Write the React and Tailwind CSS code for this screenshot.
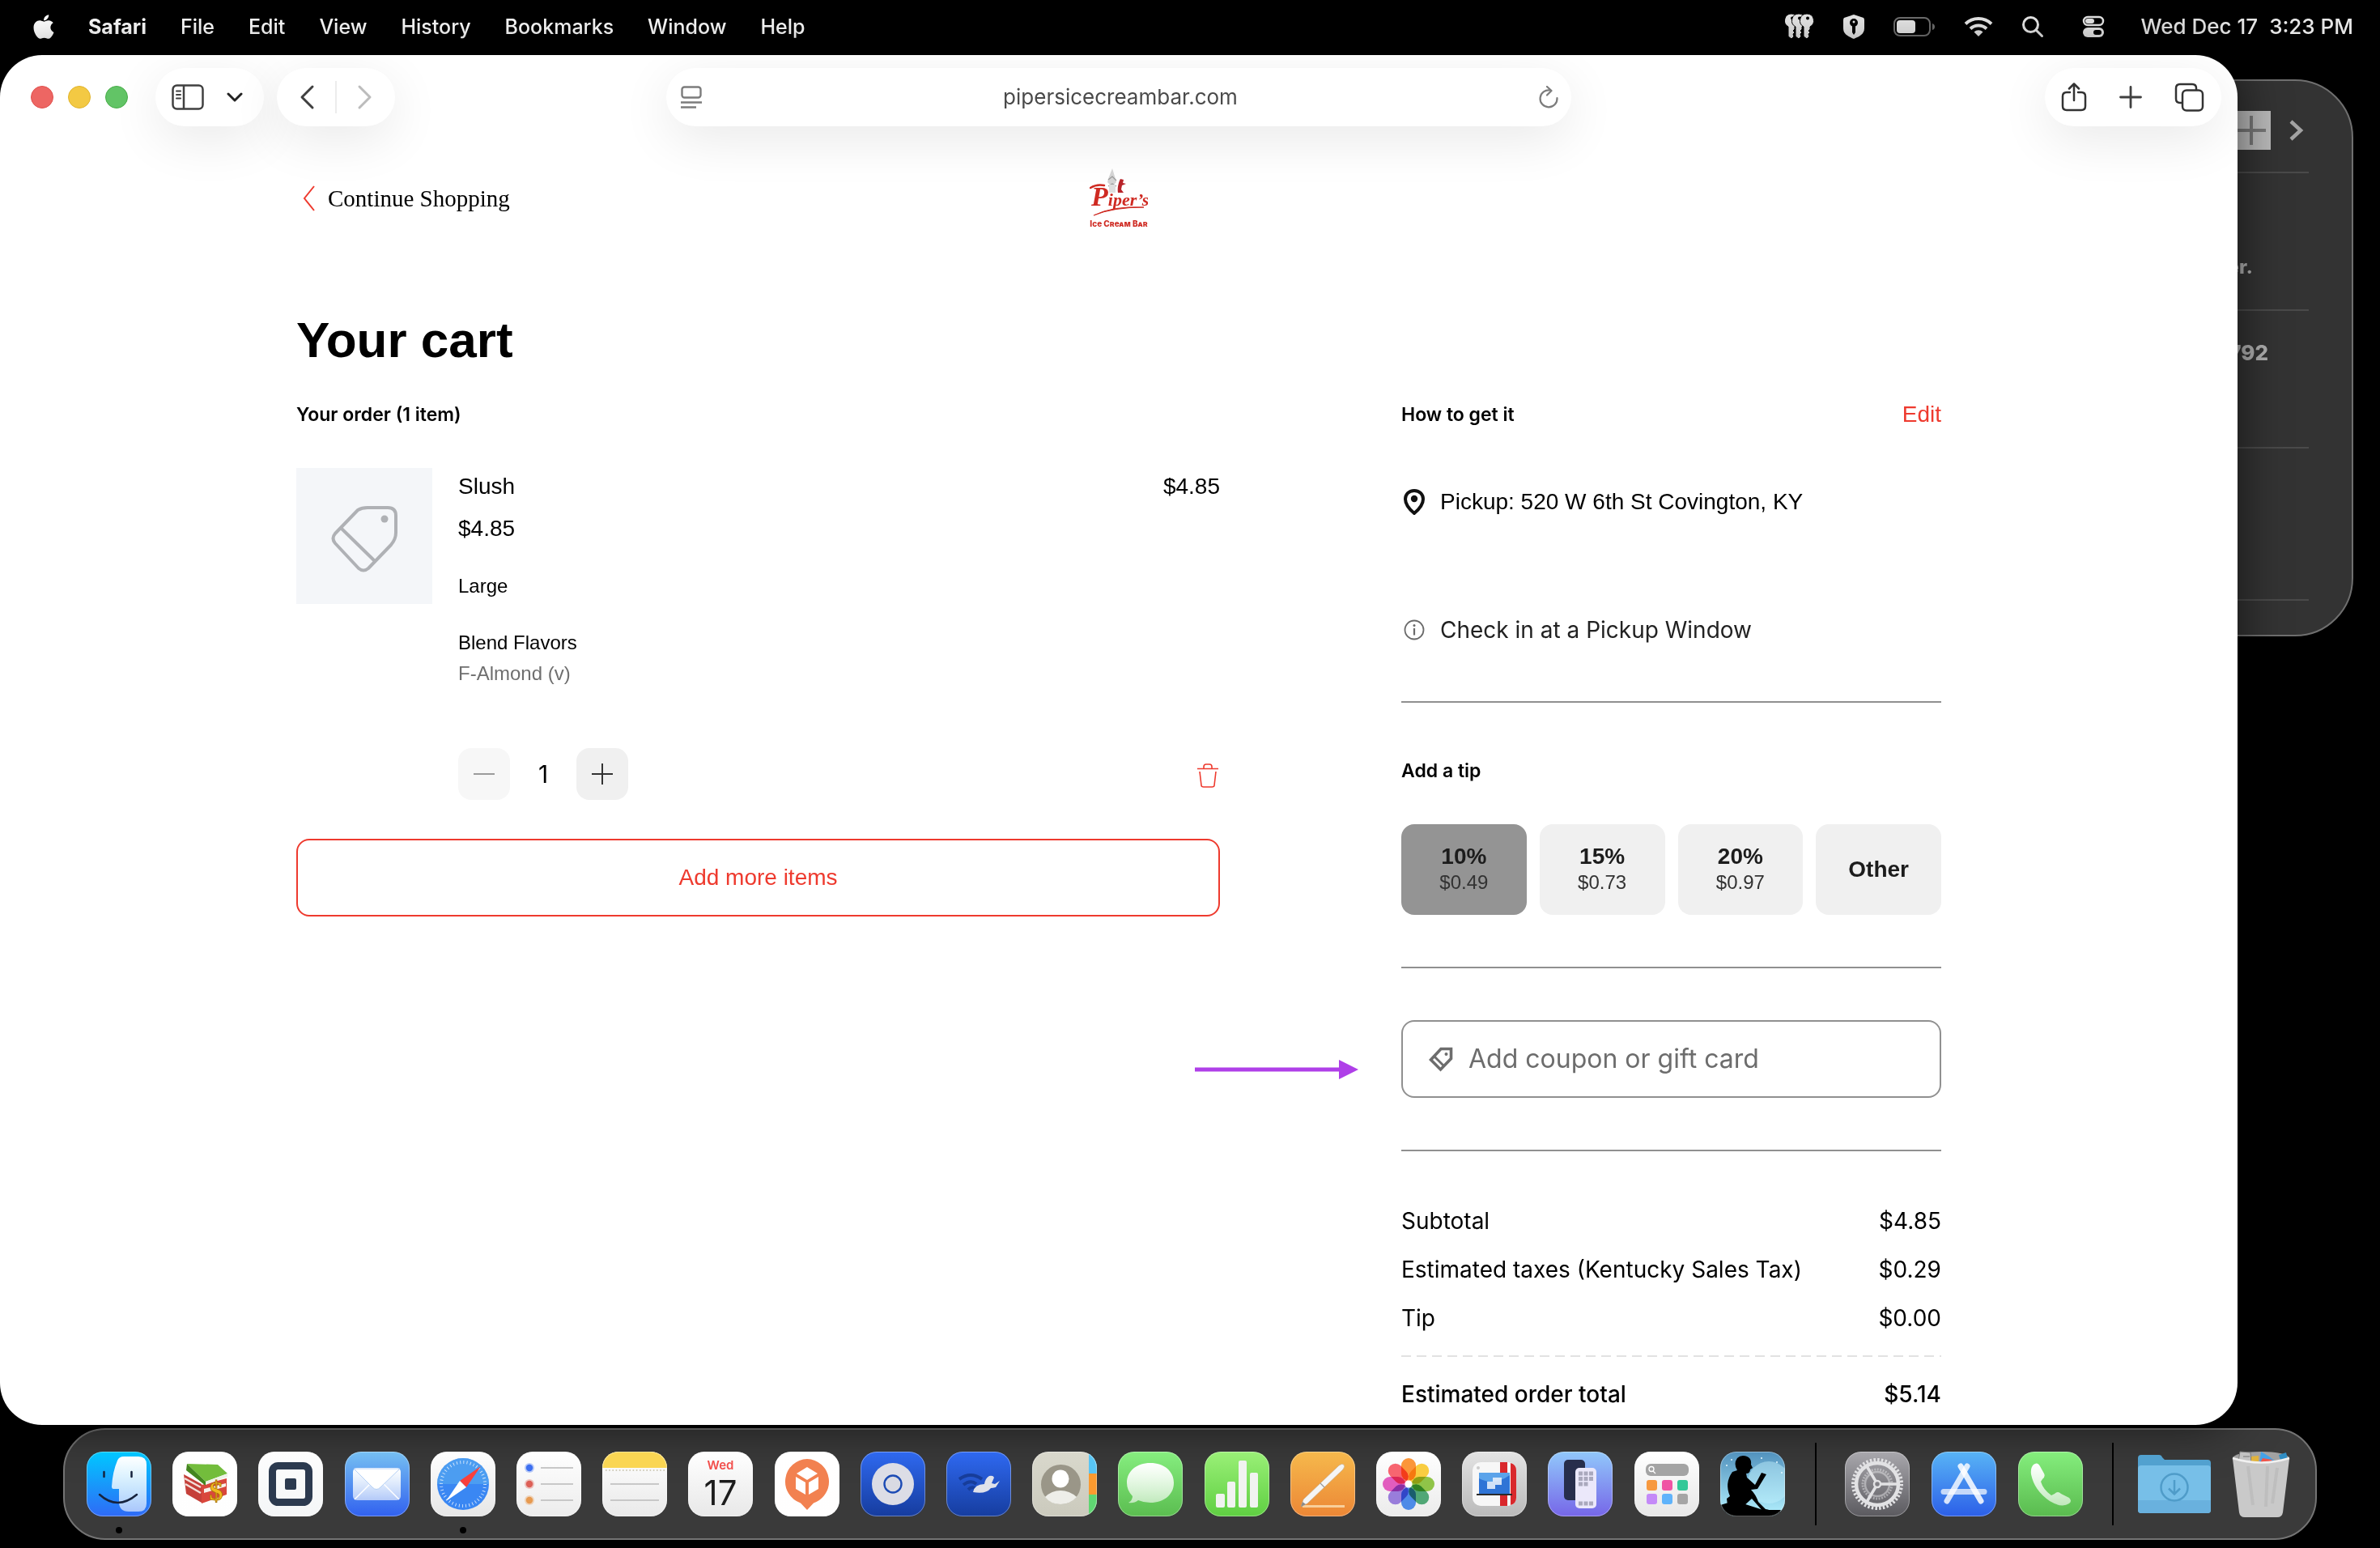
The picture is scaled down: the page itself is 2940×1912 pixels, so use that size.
import { useState } from "react";
import { FaApple } from "react-icons/fa";

const menus = ["File", "Edit", "View", "History", "Bookmarks", "Window", "Help"];

const tips = [
  { id: "10", label: "10%", amount: "$0.49" },
  { id: "15", label: "15%", amount: "$0.73" },
  { id: "20", label: "20%", amount: "$0.97" },
  { id: "other", label: "Other" },
];

const totals = [
  { label: "Subtotal", value: "$4.85" },
  { label: "Estimated taxes (Kentucky Sales Tax)", value: "$0.29" },
  { label: "Tip", value: "$0.00" },
];

/* Menu bar */
const KeysIcon = () => (
  <svg className="w-9 h-8" viewBox="0 0 36 32" fill="#e6e6e6">
    {[8, 17, 27].map((x) => (
      <g key={x} stroke="#000" strokeWidth="1">
        <path d={`M${x} 0a8.500 8.500 0 0 1 4 16v3l-2 2 2 2-2 2 1 3-3 3-4-3V16a8.500 8.500 0 0 1 4-16z`} />
        <circle cx={x + 1} cy="5.500" r="2" fill="#000" stroke="none" />
      </g>
    ))}
  </svg>
);

const ShieldIcon = () => (
  <svg className="w-7 h-8" viewBox="0 0 28 32">
    <path d="M14 1 26 5q1 1 1 3v10c0 7-6 10-13 13C7 28 1 25 1 18V8q0-2 1-3z" fill="#e6e6e6" />
    <circle cx="14" cy="11" r="5" />
    <path d="M12 14h4v9l-2 3-2-3z" />
    <circle cx="14" cy="10" r="1.500" fill="#e6e6e6" />
  </svg>
);

const BatteryIcon = () => (
  <svg className="w-[52px] h-6" viewBox="0 0 52 24">
    <rect x="1" y="1" width="44" height="22" rx="7" fill="none" stroke="#6e6e6e" strokeWidth="2" />
    <rect x="4" y="4" width="23" height="16" rx="4" fill="#e6e6e6" />
    <path d="M48 8q3 1 3 4t-3 4z" fill="#6e6e6e" />
  </svg>
);

const WifiIcon = () => (
  <svg className="w-9 h-[26px]" viewBox="0 0 36 26" fill="none" stroke="#e6e6e6" strokeWidth="4">
    <path d="M2 9.500a23 23 0 0 1 32 0" />
    <path d="M8 15.500a14.500 14.500 0 0 1 20 0" />
    <path d="M18 25l-5.500-5.500a8 8 0 0 1 11 0z" fill="#e6e6e6" stroke="none" />
  </svg>
);

const SearchIcon = () => (
  <svg className="w-7 h-7" viewBox="0 0 28 28" fill="none" stroke="#e6e6e6" strokeWidth="3" strokeLinecap="round">
    <circle cx="11.500" cy="11.500" r="9" />
    <path d="M18.500 18.500 25.500 25.500" />
  </svg>
);

const ControlIcon = () => (
  <svg className="w-7 h-7" viewBox="0 0 28 28">
    <rect x="2" y="2" width="24" height="10" rx="5" fill="none" stroke="#e6e6e6" strokeWidth="2.500" />
    <rect x="4" y="4" width="11" height="6" rx="3" fill="#e6e6e6" />
    <rect x="1" y="15" width="26" height="12" rx="6" fill="#e6e6e6" />
    <rect x="14" y="18" width="10" height="6" rx="3" />
  </svg>
);

const MenuBar = () => (
  <header className="flex h-[68px] shrink-0 items-center justify-between pb-0.5 pl-[41px] pr-[33px] text-[25px] leading-8 text-white font-medium">
    <nav className="flex items-center gap-[42px]">
      <FaApple className="h-[34px] w-[26px]" />
      <span className="font-bold">Safari</span>
      {menus.map((item) => (
        <button key={item}>{item}</button>
      ))}
    </nav>
    <div className="flex items-center">
      <div className="mr-11 flex items-center gap-[35px]">
        <KeysIcon />
        <ShieldIcon />
        <BatteryIcon />
        <WifiIcon />
        <SearchIcon />
        <span className="ml-3">
          <ControlIcon />
        </span>
      </div>
      <time className="flex gap-3.5 text-[26px] text-[#e6e6e6]">
        <span>Wed Dec 17</span>
        <span>3:23 PM</span>
      </time>
    </div>
  </header>
);

/* Browser toolbar */
const pill = "flex h-[72px] items-center rounded-full bg-white shadow-[0_16px_64px_rgba(0,0,0,0.09)]";

const Toolbar = () => (
  <div className="grid grid-cols-[1fr_1118px_1fr] items-center px-5 pt-4">
    <div className="flex items-center pl-[18px]">
      <div className="flex gap-[18px]">
        <span className="size-7 rounded-full border border-[#e0504d] bg-[#ed6663]" />
        <span className="size-7 rounded-full border border-[#e0b32c] bg-[#f3c943]" />
        <span className="size-7 rounded-full border border-[#48ad49] bg-[#62c466]" />
      </div>
      <div className={`${pill} ml-[34px] gap-7 pl-5 pr-[26px]`}>
        <button aria-label="Sidebar">
          <svg className="h-8 w-10" viewBox="0 0 40 32" fill="none" stroke="#404040" strokeWidth="2.500">
            <rect x="1.500" y="1.500" width="37" height="29" rx="5" />
            <path d="M15 2v28" />
            <path d="M6 8.500h5M6 13h5M6 17.500h5" strokeWidth="2" strokeLinecap="round" />
          </svg>
        </button>
        <button aria-label="Tab groups">
          <svg className="h-4 w-5" viewBox="0 0 20 16" fill="none" stroke="#222" strokeWidth="3" strokeLinecap="round" strokeLinejoin="round">
            <path d="M2 4l8 8 8-8" />
          </svg>
        </button>
      </div>
      <div className={`${pill} ml-4 gap-6 px-7`}>
        <button aria-label="Back">
          <svg className="h-8 w-5" viewBox="0 0 20 32" fill="none" stroke="#404040" strokeWidth="3" strokeLinecap="round" strokeLinejoin="round">
            <path d="M16 3 3 16l13 13" />
          </svg>
        </button>
        <span className="h-10 w-0.5 bg-[#ececec]" />
        <button aria-label="Forward">
          <svg className="h-8 w-5" viewBox="0 0 20 32" fill="none" stroke="#bcbcbc" strokeWidth="3" strokeLinecap="round" strokeLinejoin="round">
            <path d="M4 3l13 13L4 29" />
          </svg>
        </button>
      </div>
    </div>
    <div className={`${pill} justify-between pl-[18px] pr-3.5 text-[26px] leading-8 text-[#4a4a4a]`}>
      <svg className="h-7 w-7" viewBox="0 0 28 28" fill="none" stroke="#7c7c7c" strokeWidth="2.400">
        <rect x="1.500" y="1.500" width="23" height="13" rx="3" />
        <path d="M0 20.500h26M0 26.500h19" />
      </svg>
      <span>pipersicecreambar.com</span>
      <button aria-label="Reload">
        <svg className="h-7 w-7" viewBox="0 0 28 28" fill="none" stroke="#7c7c7c" strokeWidth="2.200" strokeLinecap="round" strokeLinejoin="round">
          <path d="M16 5.500A10.500 10.500 0 1 0 24.500 15" />
          <path d="M12 1l5.500 5-5.500 5.500" />
        </svg>
      </button>
    </div>
    <div className="flex justify-end">
      <div className={`${pill} gap-10 px-5`}>
        <button aria-label="Share">
          <svg className="h-9 w-8" viewBox="0 0 32 36" fill="none" stroke="#333" strokeWidth="2.500" strokeLinecap="round" strokeLinejoin="round">
            <path d="M11 12H7q-5 0-5 5v12q0 5 5 5h18q5 0 5-5V17q0-5-5-5h-4" />
            <path d="M16 22V1.500M10 7.500l6-6 6 6" />
          </svg>
        </button>
        <button aria-label="New tab">
          <svg className="h-7 w-7" viewBox="0 0 28 28" stroke="#404040" strokeWidth="2.800" strokeLinecap="round">
            <path d="M14 1.500v25M1.500 14h25" />
          </svg>
        </button>
        <button aria-label="Tabs">
          <svg className="h-9 w-[38px]" viewBox="0 0 38 36" fill="none" stroke="#333" strokeWidth="2.500">
            <path d="M9 25H7q-5 0-5-5V7q0-5 5-5h15q5 0 5 5v2" />
            <rect x="10" y="9.500" width="25" height="25" rx="5" />
          </svg>
        </button>
      </div>
    </div>
  </div>
);

const PipersLogo = () => (
  <svg className="h-[73px] w-[72px]" viewBox="0 0 72 73">
    <path d="M28 0l4 13 1 4-3 3h-5l-3-3 1-4z" fill="#d4d4d4" />
    <path d="M23 14l5-4 5 5M23 22l5-3 5 3" fill="none" stroke="#999" strokeWidth="1.200" />
    <path d="M24 20h8v10h-8z" fill="#dedede" />
    <path d="M35 30c-1-7 1-13 3-17l4 1-1 4 4 1-5 2-1 5 3 4z" fill="#b8242a" />
    <path d="M1 24q8-5 17-3" fill="none" stroke="#cf2a22" strokeWidth="2.500" strokeLinecap="round" />
    <path d="M5 58q24-12 62-10-38 0-62 10z" fill="#cf2a22" stroke="#cf2a22" strokeWidth="1" />
    <text x="2" y="46" fontSize="34" fontWeight="700" fontStyle="italic" fill="#cf2a22" fontFamily="Liberation Serif, serif">
      P<tspan fontSize="22">iper’s</tspan>
    </text>
    <text x="36" y="72" textAnchor="middle" fontSize="10" fontWeight="800" fill="#cf2a22" fontFamily="Inter, sans-serif" fontVariant="small-caps">
      Ice Cream Bar
    </text>
  </svg>
);

const TagIcon = ({ className, width }) => (
  <svg className={className} viewBox="0 0 84 84" fill="none" stroke="currentColor" strokeWidth={width} strokeLinejoin="round">
    <path d="M34 6 6 35q-5 6 0 12l29 31q6 5 12 0l28-29q6-7 6-15V13Q81 3 71 3H46q-7 0-12 3z" />
    <path d="M13 28 56 70" />
    <circle cx="67" cy="17" r="4.500" fill="currentColor" stroke="none" />
  </svg>
);

const CouponIcon = () => (
  <svg className="size-8" viewBox="0 0 32 32" fill="none" stroke="currentColor" strokeWidth="3.600">
    <path d="M16 3.500h12.500v12L15.500 29 3.500 17z" />
    <path d="M7.500 12.500 19.500 24.500" strokeWidth="3" />
    <circle cx="22.500" cy="10" r="2" fill="currentColor" stroke="none" />
  </svg>
);

const CartItem = () => {
  const [qty, setQty] = useState(1);

  return (
    <article className="mt-[50px] flex gap-8">
      <div className="flex size-[168px] shrink-0 items-center justify-center bg-[#f4f6f9] pt-2 text-[#afb1b5]">
        <TagIcon className="size-[84px]" width={4} />
      </div>
      <div className="flex flex-1 flex-col pt-[3px] text-2xl leading-8">
        <div className="flex justify-between text-[28px] leading-10">
          <h3>Slush</h3>
          <span>$4.85</span>
        </div>
        <p className="mt-3 text-[28px] leading-10">$4.85</p>
        <p className="mt-[35px]">Large</p>
        <p className="mt-[38px]">Blend Flavors</p>
        <p className="mt-1.5 text-[#6f6f6f]">F-Almond (v)</p>
        <div className="mt-[76px] flex items-center justify-between">
          <div className="flex items-center">
            <button
              aria-label="Remove one"
              disabled={qty === 1}
              onClick={() => setQty(qty - 1)}
              className="flex size-16 items-center justify-center rounded-2xl bg-[#f7f7f7]"
            >
              <svg className="size-[26px]" viewBox="0 0 26 26" stroke="#9b9b9b" strokeWidth="2">
                <path d="M0 13h26" />
              </svg>
            </button>
            <span className="w-[82px] text-center font-[Inter,sans-serif] text-[30px]">{qty}</span>
            <button
              aria-label="Add one"
              onClick={() => setQty(qty + 1)}
              className="flex size-16 items-center justify-center rounded-2xl bg-[#f0f0f0]"
            >
              <svg className="size-[26px]" viewBox="0 0 26 26" stroke="#333" strokeWidth="2">
                <path d="M0 13h26M13 0v26" />
              </svg>
            </button>
          </div>
          <button aria-label="Delete item" className="pt-1">
            <svg className="h-8 w-7" viewBox="0 0 28 32" fill="none" stroke="#ee3a2e" strokeWidth="1.600" strokeLinejoin="round">
              <path d="M0 7.500h26M8 7.500V5q0-3 3-3h4q3 0 3 3v2.500M3 11l2 17q0 2 3 2h10q3 0 3-2l2-17" />
            </svg>
          </button>
        </div>
      </div>
    </article>
  );
};

const Divider = ({ className = "" }) => <hr className={`border-t-2 border-[#909090] ${className}`} />;

const Summary = () => {
  const [tip, setTip] = useState("10");
  const [coupon, setCoupon] = useState("");

  return (
    <aside className="w-[667px] shrink-0">
      <div className="flex h-8 items-center justify-between">
        <h2 className="font-[Inter,sans-serif] text-[23px] font-semibold">How to get it</h2>
        <a href="#edit" className="text-[28px] text-[#ee3a2e]">Edit</a>
      </div>

      <div className="mt-[72px] flex items-center gap-[17px] pl-px text-[28px] leading-10">
        <svg className="h-8 w-[30px]" viewBox="0 0 30 32" fill="none" stroke="#111" strokeWidth="4">
          <path d="M15 2C8 2 4 7 4 12.500 4 19 9 25 15 30c6-5 11-11 11-17.500C26 7 22 2 15 2z" />
          <circle cx="15" cy="12" r="4.200" fill="#111" stroke="none" />
        </svg>
        <p>Pickup: 520 W 6th St Covington, KY</p>
      </div>
      <div className="mt-[118px] flex items-center gap-[17px] pl-px font-[Inter,sans-serif] text-[28px] leading-10 text-[#222]">
        <svg className="h-[26px] w-[30px]" viewBox="0 0 30 26" fill="none" stroke="#6a6a6a" strokeWidth="1.800">
          <circle cx="15" cy="13" r="11.500" />
          <path d="M15 11v8.500" strokeWidth="2.200" />
          <circle cx="15" cy="7.500" r="1.500" fill="#6a6a6a" stroke="none" />
        </svg>
        <p>Check in at a Pickup Window</p>
      </div>
      <Divider className="mt-[68px]" />

      <h2 className="mt-[68px] font-[Inter,sans-serif] text-[23px] font-semibold leading-8">Add a tip</h2>
      <div className="mt-[50px] grid grid-cols-4 gap-4">
        {tips.map((option) => (
          <button
            key={option.id}
            onClick={() => setTip(option.id)}
            className={`flex h-28 flex-col items-center justify-center rounded-2xl text-[#1c1c1c] ${
              tip === option.id ? "bg-[#949494]" : "bg-[#f0f0f0]"
            }`}
          >
            <span className="text-[28px] font-bold leading-8">{option.label}</span>
            {option.amount && <span className="text-2xl leading-8 text-[#333]">{option.amount}</span>}
          </button>
        ))}
      </div>
      <Divider className="mt-16" />

      <div className="relative my-16">
        <svg className="absolute right-full top-12 mr-[53px] h-[26px] w-[202px]" viewBox="0 0 202 26" fill="#af3fe8">
          <path d="M0 10.500h178V1l24 12-24 12v-9.500H0z" />
        </svg>
        <label className="flex h-24 items-center gap-[18px] rounded-2xl border-2 border-[#909090] px-[31px] text-[#6d6d6d]">
          <CouponIcon />
          <input
            aria-label="Add coupon or gift card"
            value={coupon}
            onChange={(e) => setCoupon(e.target.value)}
            placeholder="Add coupon or gift card"
            className="flex-1 font-[Inter,sans-serif] text-[32px] leading-10 outline-none placeholder:text-[#6d6d6d]"
          />
        </label>
      </div>
      <Divider />

      <dl className="mt-[66px] flex flex-col gap-5 font-[Inter,sans-serif] text-[28px] leading-10">
        {totals.map((row) => (
          <div key={row.label} className="flex justify-between">
            <dt>{row.label}</dt>
            <dd>{row.value}</dd>
          </div>
        ))}
      </dl>
      <div className="mt-[26px] h-0.5 bg-[repeating-linear-gradient(90deg,#e2e2e2_0_12px,transparent_12px_19px)]" />
      <dl className="mt-[26px] flex justify-between font-[Inter,sans-serif] text-[28px] font-medium leading-10">
        <dt>Estimated order total</dt>
        <dd>$5.14</dd>
      </dl>
    </aside>
  );
};

const BrowserWindow = () => (
  <section className="relative mr-[176px] flex-1 overflow-hidden rounded-[52px] bg-white pb-[18px] shadow-[0_0_60px_rgba(0,0,0,0.6)]">
    <Toolbar />
    <main className="px-[366px] font-['Liberation_Sans',sans-serif] text-black">
      <div className="mt-[52px] grid grid-cols-3 items-center">
        <a href="#shop" className="flex items-center gap-4 pl-2 font-['Liberation_Serif',serif] text-[29px] leading-9">
          <svg className="h-8 w-[15px]" viewBox="0 0 15 32" fill="none" stroke="#ee3a2e" strokeWidth="2">
            <path d="M14 1 2 16l12 15" />
          </svg>
          Continue Shopping
        </a>
        <div className="flex justify-center">
          <PipersLogo />
        </div>
      </div>
      <h1 className="mt-[103px] text-[62px] font-bold leading-[72px]">Your cart</h1>
      <div className="mt-10 flex gap-56">
        <div className="flex-1">
          <h2 className="font-[Inter,sans-serif] text-[23px] font-semibold leading-8">Your order (1 item)</h2>
          <CartItem />
          <button className="mt-12 h-24 w-full rounded-2xl border-2 border-[#ee3a2e] text-[28px] text-[#ee3a2e]">
            Add more items
          </button>
        </div>
        <Summary />
      </div>
    </main>
  </section>
);

/* Dark window that peeks out behind the browser */
const BackWindow = () => (
  <section className="absolute right-[33px] top-[30px] flex w-[400px] flex-col rounded-[72px] border-2 border-[#6f6f6f] bg-[#333] pb-[42px] pr-[53px] text-right text-2xl font-extrabold text-[#b0b0b0]">
    <div className="flex h-[114px] items-center justify-end gap-[23px] border-b-2 border-[#4a4a4a] pr-1.5 pt-2.5">
      <svg className="h-12 w-12" viewBox="0 0 48 48">
        <rect width="48" height="48" fill="#b9b9b9" />
        <path d="M24 6v36M5 24h37" stroke="#777" strokeWidth="4" />
      </svg>
      <svg className="h-8 w-[18px]" viewBox="0 0 18 32" fill="none" stroke="#a3a3a3" strokeWidth="4.500">
        <path d="M2 5l12 11L2 27" />
      </svg>
    </div>
    <p className="h-[170px] border-b-2 border-[#4a4a4a] pr-[69px] pt-[100px] leading-8">customer.</p>
    <p className="h-[170px] border-b-2 border-[#4a4a4a] pr-[50px] pt-9 text-[26px] leading-8">792</p>
    <div className="h-[188px] border-b-2 border-[#4a4a4a]" />
  </section>
);

/* Dock */
const Tile = ({ from, to, children }) => {
  const id = `tile${from}${to}`.replace(/#/g, "");
  return (
    <svg className="size-20" viewBox="0 0 80 80">
      <defs>
        <linearGradient id={id} x2="0" y2="1">
          <stop stopColor={from} />
          <stop offset="1" stopColor={to} />
        </linearGradient>
        <clipPath id={`${id}c`}>
          <rect width="80" height="80" rx="20" />
        </clipPath>
        <linearGradient id="glass" x2="0" y2="1">
          <stop stopColor="#fff" />
          <stop offset="1" stopColor="#fff" stopOpacity="0.6" />
        </linearGradient>
      </defs>
      <g clipPath={`url(#${id}c)`}>
        <rect width="80" height="80" fill={`url(#${id})`} />
        {children}
      </g>
      <rect x="0.500" y="0.500" width="79" height="79" rx="19.500" fill="none" stroke="#fff" strokeOpacity="0.350" />
    </svg>
  );
};

const Finder = () => (
  <Tile from="#00c8ff" to="#2f6af6">
    <path d="M46 6h18q10 0 10 10v48q0 10-10 10H52q-12 0-12-12V46h-7q-2 0-2-3 1-18 7-32 2-5 8-5z" fill="url(#glass)" />
    <g fill="none" stroke="#16233d" strokeWidth="2.500" strokeLinecap="round">
      <path d="M21.500 25v6M55.500 25v6M16 53q22 20 46 0" />
    </g>
  </Tile>
);

const Ledger = () => (
  <Tile from="#ffffff" to="#fefefe">
    <path d="M14 28l22 12v23L17 52z" fill="#c5403a" />
    <path d="M16 40l19 11M15 33l20 11" stroke="#f3ded8" strokeWidth="2.500" />
    <path d="M36 41l31-8v20l-31 11z" fill="#d9473c" />
    <path d="M39 46l27-7v4l-27 8z" fill="#f7f2ec" />
    <path d="M18 15l38 1 12 11-27 10z" fill="#73bd3c" />
    <path d="M18 15l23 22v5L17 23z" fill="#43861f" />
    <path d="M41 37l27-10v4l-27 10z" fill="#eef2e8" />
    <text x="54" y="60" textAnchor="middle" fontSize="34" fontWeight="700" fill="#f1b81f" stroke="#a87405" strokeWidth="0.800" fontFamily="Liberation Serif, serif">$</text>
  </Tile>
);

const SquareApp = () => (
  <Tile from="#fdfdfd" to="#f4f6f7">
    <rect x="17.500" y="17.500" width="45" height="45" rx="7" fill="none" stroke="#2c3a4f" strokeWidth="9" />
    <rect x="33" y="33" width="14" height="14" rx="2" fill="#2c3a4f" />
  </Tile>
);

const Mail = () => (
  <Tile from="#76c0f2" to="#3161ef">
    <rect x="10" y="20" width="59" height="40" rx="5" fill="url(#glass)" />
    <path d="M12 59l20-20M67 59L47 39" stroke="#fff" strokeWidth="1.500" />
    <path d="M11 21l23 23q5 5 10 0l24-23z" fill="#fff" stroke="#b4d0f5" strokeWidth="1" />
  </Tile>
);

const Safari = () => (
  <Tile from="#fefefe" to="#e6e6e6">
    <circle cx="40" cy="40" r="32" fill="#3a87f3" />
    <path d="M8 40a32 32 0 0 1 64 0z" fill="#58abf0" opacity="0.600" />
    <circle cx="40" cy="40" r="27" fill="none" stroke="#fff" strokeWidth="4" strokeDasharray="0.900 3.340" opacity="0.800" />
    <path d="M62 18 44 44l-8-8z" fill="#f9403c" />
    <path d="M19 61l17-25 8 8z" fill="#fff" />
  </Tile>
);

const Reminders = () => (
  <Tile from="#ffffff" to="#ececec">
    {[["#3d6ff0", 20], ["#dd6057", 40], ["#e79a50", 60]].map(([fill, y]) => (
      <g key={y}>
        <circle cx="16" cy={y} r="6" fill={fill} opacity="0.350" />
        <circle cx="16" cy={y} r="4.200" fill={fill} />
        <path d={`M30 ${y}h40`} stroke="#c8c8c8" strokeWidth="2" />
      </g>
    ))}
  </Tile>
);

const Notes = () => (
  <Tile from="#ffffff" to="#e9e9e9">
    <rect width="80" height="20" fill="#fad653" />
    <path d="M4 23h74" stroke="#c2bda5" strokeWidth="1.600" strokeDasharray="1.600 2.600" />
    <path d="M10 40h60M10 60h60" stroke="#c8c8c8" strokeWidth="2" />
  </Tile>
);

const CalendarApp = () => (
  <Tile from="#ffffff" to="#e8e8e8">
    <g fontFamily="Inter, sans-serif" textAnchor="middle">
      <text x="40" y="22" fontSize="15" fontWeight="600" fill="#f24e4b">Wed</text>
      <text x="40" y="66" fontSize="42" fill="#1c1c1c">17</text>
    </g>
  </Tile>
);

const Parcel = () => (
  <Tile from="#ffffff" to="#fffefe">
    <path d="M40 9a28 28 0 0 1 8 54.500L40 72l-8-8.500A28 28 0 0 1 40 9z" fill="#f28150" />
    <path d="M40 19l13 8-13 8-13-8zM26 31l12 7v15l-12-7zM54 31l-12 7v15l12-7z" fill="#fff" />
  </Tile>
);

const Lens = () => (
  <Tile from="#2f69f0" to="#163c9e">
    <circle cx="40" cy="40" r="26" fill="#dcdde6" />
    <circle cx="40" cy="40" r="10.500" fill="#d9dae3" stroke="#1c4bb5" strokeWidth="2.400" />
  </Tile>
);

const Bird = () => (
  <Tile from="#2f69f1" to="#163d9f">
    <g fill="none" stroke="#173d9a" strokeWidth="4">
      <path d="M16 34q14-10 28 0M21 41q9-7 16-1M27 47q4-4 8-2" />
    </g>
    <path d="M33 50q2-10 14-10 1-7 6-10 5-1 6 2l-3 7 4 1 6-4-5 8q-4 1-6 1-6 8-22 5z" fill="#dfe1ea" />
  </Tile>
);

const Contacts = () => (
  <Tile from="#d9d8cc" to="#cbcabd">
    <path d="M70 0h10v27H70z" fill="#58c5f5" />
    <path d="M70 27h10v26H70z" fill="#fb9a2f" />
    <path d="M70 53h10v27H70z" fill="#5fd672" />
    <circle cx="35.500" cy="40.500" r="24.500" fill="#9a9688" />
    <ellipse cx="35" cy="33.500" rx="10.500" ry="11" fill="#fff" />
    <path d="M16 56q8-8 19-8t20 8q-8 9-20 9t-19-9z" fill="#eeeee9" />
  </Tile>
);

const Messages = () => (
  <Tile from="#86ee7f" to="#5bbd50">
    <path d="M40 14c17 0 29 10 29 24.500S57 63 40 63q-8 0-15-3-5 4-12 3 5-3 5-8-7-7-7-16.500C11 24 23 14 40 14z" fill="url(#glass)" />
  </Tile>
);

const Numbers = () => (
  <Tile from="#9af077" to="#5fcf42">
    <g fill="#f1f3f0">
      <rect x="14" y="52" width="11" height="17" rx="2" />
      <rect x="28" y="37" width="10" height="32" rx="2" />
      <rect x="42" y="11" width="10" height="58" rx="2" />
      <rect x="56" y="26" width="10" height="43" rx="2" />
    </g>
  </Tile>
);

const Pages = () => (
  <Tile from="#f6b94c" to="#ec8736">
    <path d="M15 67.500h52" stroke="#f8cf9a" strokeWidth="3" />
    <path d="M13 68l3-9 44-42q4-3 6-1t-1 6L21 64z" fill="#f5f5f5" stroke="#bfa37c" strokeWidth="0.600" />
    <path d="M13 68l2-6 4 3z" fill="#8a8a8a" />
    <path d="M37 39l5 5" stroke="#999" strokeWidth="1.200" />
  </Tile>
);

const petals = ["#fb8b24", "#f9c82c", "#85bf35", "#3f9f68", "#3b7fe6", "#8f70d8", "#e04cb8", "#f75460"];

const Photos = () => (
  <Tile from="#ffffff" to="#ebebeb">
    <g className="isolate">
      {petals.map((fill, i) => (
        <rect
          key={fill}
          x="31"
          y="8"
          width="18"
          height="28"
          rx="9"
          fill={fill}
          opacity="0.900"
          transform={`rotate(${i * 45} 40 40)`}
          className="mix-blend-multiply"
        />
      ))}
    </g>
    <circle cx="40" cy="40" r="4.500" fill="#fff" />
  </Tile>
);

const RemoteDesktop = () => (
  <Tile from="#e3e3e3" to="#bababa">
    <rect x="13" y="13" width="54" height="54" rx="10" fill="#f7f7f7" />
    <path d="M47 13h9v54h-9zM60 14q7 2 7 9v34q0 7-7 9z" fill="#d9282c" />
    <circle cx="20" cy="20" r="2" fill="#ccc" />
    <rect x="21" y="26" width="38" height="27" rx="1" fill="#2f74d6" />
    <path d="M21 33q18 10 38-4v-3H21z" fill="#5ba3ea" />
    <path d="M18 52h44v2H18z" fill="#2b2b2b" />
    <path d="M31 37h10v9H31zM38 32h11v9H38z" fill="#e4eefb" opacity="0.900" />
  </Tile>
);

const PhoneMirror = () => (
  <Tile from="#91c8fb" to="#7666e8">
    <rect x="20" y="10" width="26" height="50" rx="5" fill="#272e4c" />
    <rect x="34" y="20" width="26" height="50" rx="5" fill="#ebe8fa" />
    <path d="M38 27h19M38 33.500h19M38 40h12M38 64h19" stroke="#aaa9bd" strokeWidth="5" strokeDasharray="5 1.500" />
  </Tile>
);

const AppsGrid = () => (
  <Tile from="#ffffff" to="#e7e7e7">
    <rect x="14" y="15" width="53" height="15" rx="6" fill="#a4a4a4" />
    <g fill="none" stroke="#fff" strokeWidth="1.300">
      <circle cx="21" cy="21.500" r="3" />
      <path d="M23 24l3 3" />
    </g>
    {["#f7993f", "#f054a4", "#33c898", "#c48af8", "#5fb3fb", "#a5a5a5"].map((fill, i) => (
      <rect key={fill} x={15 + (i % 3) * 19} y={i < 3 ? 35 : 52} width="13" height="13" rx="3" fill={fill} />
    ))}
  </Tile>
);

const Kindle = () => (
  <Tile from="#5191bd" to="#b4f2ff">
    <circle cx="60" cy="38" r="26" fill="#c5f3ff" opacity="0.450" />
    <g fill="#e9f8ff">
      <circle cx="8" cy="17" r="1" />
      <circle cx="51" cy="8" r="1" />
      <circle cx="70" cy="13" r="1" />
      <circle cx="76" cy="26" r="1" />
      <circle cx="14" cy="10" r="1" />
    </g>
    <path d="M0 66q14-6 28-2l25 8h22l-3 8H0z" />
    <path d="M28 5c8 0 11 5 10 11l2 4-3 2q0 5-5 5l1 5 10 9 8-15 6 2-11 18-8 1q6 6 9 15l9 9q6 1 8 3H53L39 58 28 68l-19-2-1-8 4-3q-7-16 3-30l6-2q-5-8 0-15 3-3 7-3z" />
  </Tile>
);

const SystemSettings = () => (
  <Tile from="#a9a8ad" to="#5b5a5f">
    <g fill="none" stroke="#e2e2e4">
      <circle cx="40" cy="40" r="30" strokeWidth="4" strokeDasharray="2.500 2.210" />
      <circle cx="40" cy="40" r="26" strokeWidth="4.500" />
      <circle cx="40" cy="40" r="18" strokeWidth="3" strokeDasharray="2 1.500" opacity="0.500" />
      <circle cx="40" cy="40" r="15" strokeWidth="2.500" opacity="0.500" />
      <path d="M44 40h22M38 36.500 27 18M38 43.500 27 62" strokeWidth="3.500" />
      <circle cx="40" cy="40" r="4" strokeWidth="2.500" />
    </g>
  </Tile>
);

const AppStore = () => (
  <Tile from="#58b4f6" to="#2c5fe8">
    <g stroke="#fff" strokeWidth="7" strokeLinecap="round">
      <path d="M36 18l25 43" opacity="0.850" />
      <path d="M44 18 19 61" opacity="0.800" />
      <path d="M15 49.500h50" opacity="0.700" />
    </g>
  </Tile>
);

const Phone = () => (
  <Tile from="#85ee7d" to="#5abb4f">
    <path d="M19 16q5-4 8 2l5 9q2 4-2 7l-2 3q3 10 13 17l4-2q4-4 8 0l10 5q4 4 0 7-9 6-24-3Q20 48 16 28q-1-8 3-12z" fill="url(#glass)" />
  </Tile>
);

const DownloadsFolder = () => (
  <svg className="h-20 w-[90px]" viewBox="0 0 90 80">
    <path d="M0 8q0-4 4-4h22q3 0 4 3l3 3h53q4 0 4 4v14H0z" fill="#52a1cf" />
    <rect y="17" width="90" height="59" rx="4" fill="#77bfe8" />
    <path d="M0 60h90v12q0 4-4 4H4q-4 0-4-4z" fill="#69b1de" />
    <g fill="none" stroke="#4f9cc9" strokeWidth="2.500">
      <circle cx="45" cy="44" r="16.500" />
      <path d="M45 35v17M38 45.500l7 7 7-7" />
    </g>
  </svg>
);

const Trash = () => (
  <svg className="h-[84px] w-[72px]" viewBox="0 0 72 84">
    <ellipse cx="36" cy="10" rx="35" ry="8" fill="#a2a2a2" />
    <path d="M8 14l2-12 13 1 1 13zM14 8h8" fill="#c3c3c3" stroke="#777" strokeWidth="1" />
    <path d="M24 8l9-1v10h-9z" fill="#e1b33c" />
    <path d="M36 2l10 6 10 8-22 2z" fill="#43a2e8" />
    <path d="M38 10l12 2-6 6-10-1z" fill="#f0564a" />
    <path d="M58 6l9-3 2 8-8 5z" fill="#2f8dc4" />
    <path d="M1 11q34 8 70 0l-8 66q-1 6-7 6H16q-6 0-7-6z" fill="#c9c9c9" />
    <path d="M20 20l6 48M44 20l-2 50M56 22l-6 44" stroke="#b4b4b4" strokeWidth="4" opacity="0.500" />
    <path d="M1 10q35 11 70 0" fill="none" stroke="#f0f0f0" strokeWidth="2.500" />
  </svg>
);

const dockApps = [
  Finder, Ledger, SquareApp, Mail, Safari, Reminders, Notes, CalendarApp, Parcel, Lens,
  Bird, Contacts, Messages, Numbers, Pages, Photos, RemoteDesktop, PhoneMirror, AppsGrid, Kindle,
];
const running = [Finder, Safari];

const DockItem = ({ icon: Icon }) => (
  <button className="relative flex h-20 items-center">
    <Icon />
    {running.includes(Icon) && (
      <span className="absolute left-1/2 top-full mt-[13px] size-2 -translate-x-1/2 rounded-full bg-black" />
    )}
  </button>
);

const Dock = () => (
  <footer className="mx-[78px] mt-1 mb-2.5 flex h-[138px] shrink-0 items-center rounded-[52px] border-2 border-[#747474] bg-[#3a3a3a] pl-[27px] pr-[31px]">
    <div className="flex flex-1 justify-between">
      {dockApps.map((icon, i) => (
        <DockItem key={i} icon={icon} />
      ))}
    </div>
    <span className="ml-[37px] mr-[35px] h-[102px] w-0.5 bg-black" />
    <div className="flex gap-[27px]">
      <DockItem icon={SystemSettings} />
      <DockItem icon={AppStore} />
      <DockItem icon={Phone} />
    </div>
    <span className="ml-9 mr-[30px] h-[102px] w-0.5 bg-black" />
    <div className="flex gap-[26px]">
      <DockItem icon={DownloadsFolder} />
      <DockItem icon={Trash} />
    </div>
  </footer>
);

export default function App() {
  return (
    <div className="flex min-h-screen flex-col bg-black font-[Inter,sans-serif]">
      <MenuBar />
      <div className="relative flex flex-1">
        <BackWindow />
        <BrowserWindow />
      </div>
      <Dock />
    </div>
  );
}
